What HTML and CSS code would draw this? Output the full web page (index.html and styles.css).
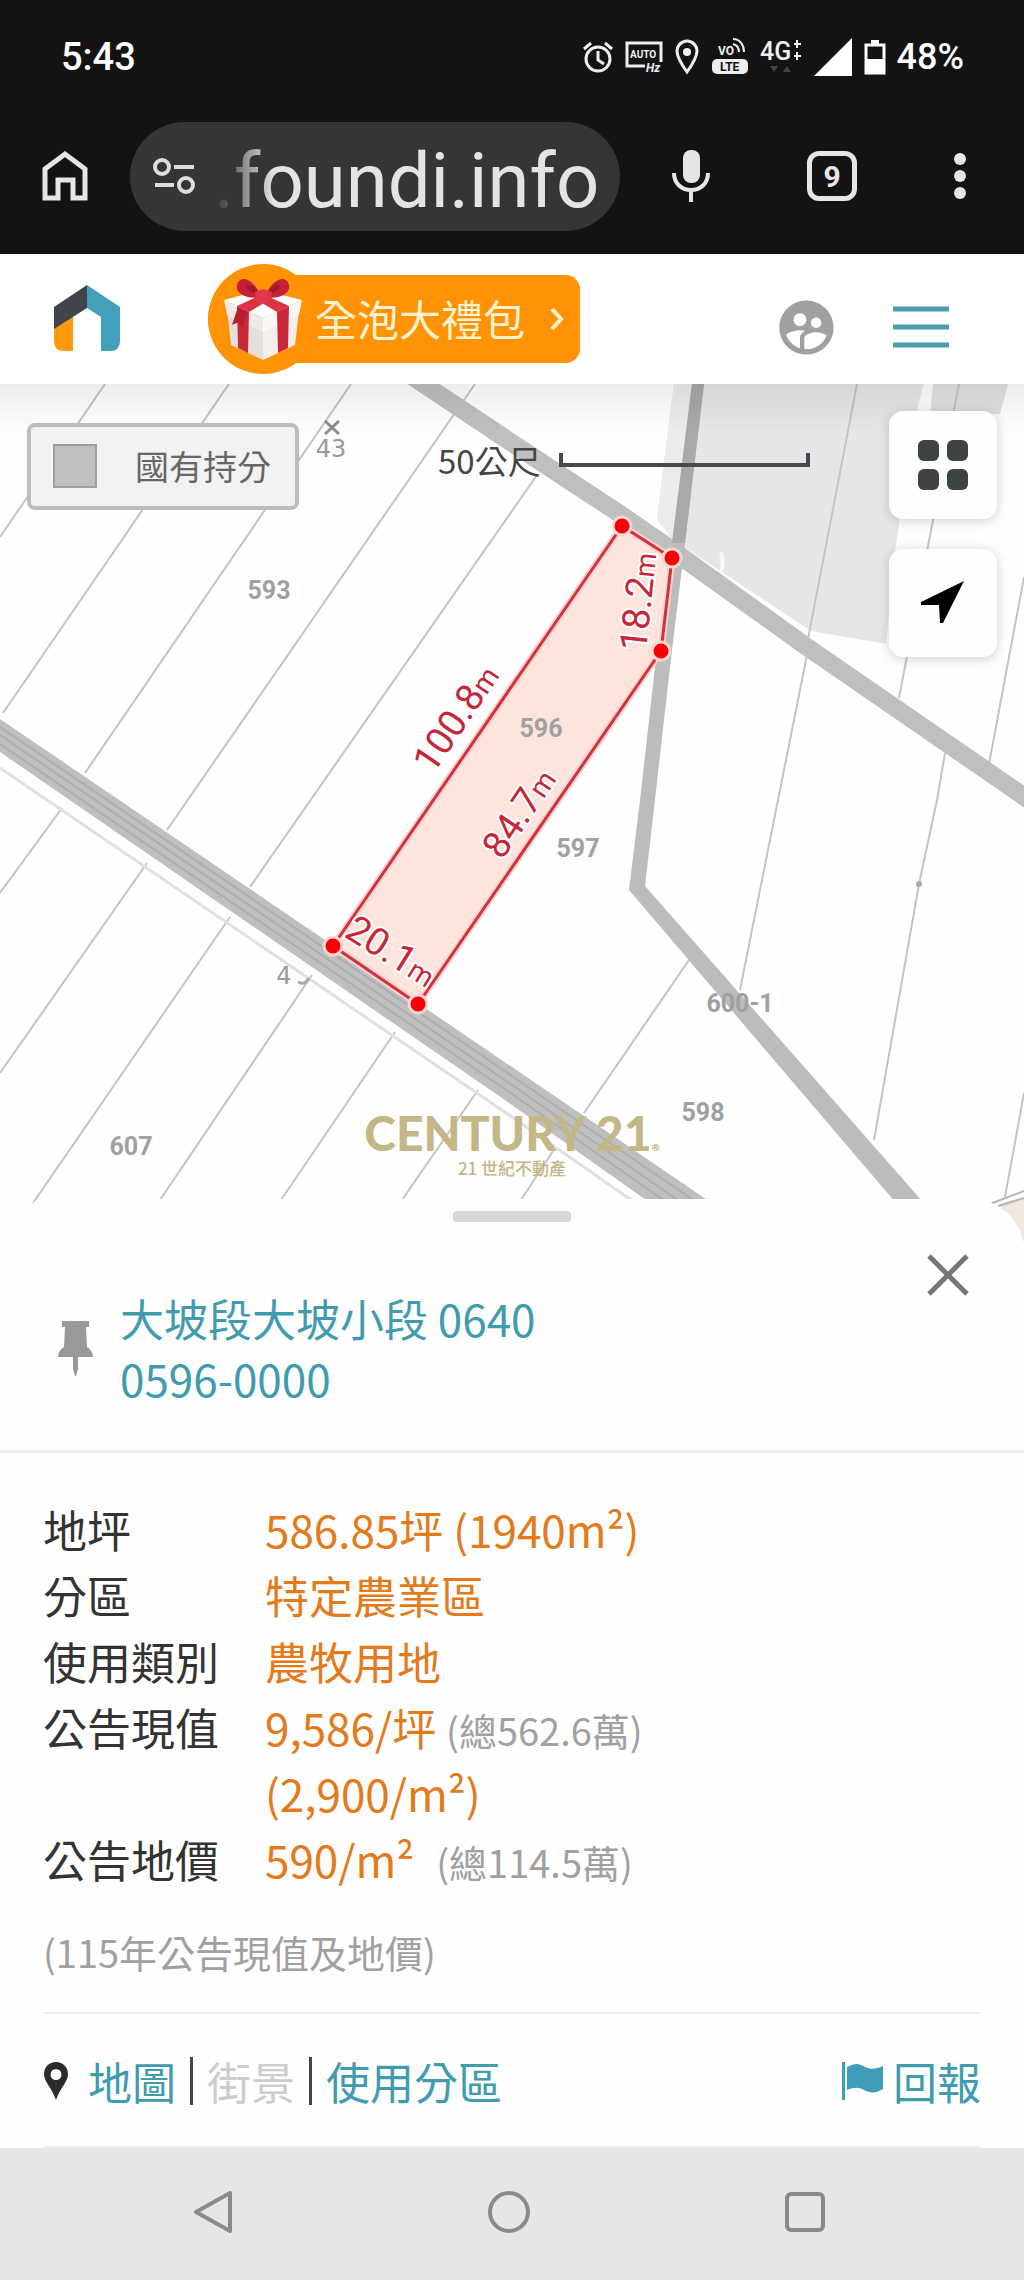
FILE: index.html
```html
<!DOCTYPE html>
<html lang="zh-Hant">
<head>
    <meta charset="UTF-8">
    <meta name="viewport" content="width=device-width, initial-scale=1.0">
    <title>foundi.info</title>
    <link rel="stylesheet" href="styles.css">
</head>
<body>
    <div class="status-bar">
        <span class="time">5:43</span>
        <div class="status-icons">
            <svg width="32" height="34" viewBox="0 0 32 34" fill="none" stroke="#eee" stroke-width="3">
                <circle cx="16" cy="19" r="12"/>
                <path d="M16 11v9l6 4M2 9l7-6M30 9l-7-6"/>
            </svg>
            <svg class="auto-icon" width="38" height="36" viewBox="0 0 38 36">
                <path d="M20 27H2V4h34v19" fill="none" stroke="#eee" stroke-width="3"/>
                <text x="5" y="19" class="tiny small">AUTO</text>
                <text x="21" y="33" class="tiny italic">Hz</text>
            </svg>
            <svg width="26" height="36" viewBox="0 0 26 36">
                <path d="M13 2C7 2 3 7 3 12c0 7 10 21 10 21s10-14 10-21c0-5-4-10-10-10z" fill="none" stroke="#eee" stroke-width="3"/>
                <circle cx="13" cy="13" r="4" fill="#eee"/>
            </svg>
            <svg width="38" height="38" viewBox="0 0 38 38">
                <text x="7" y="17" class="tiny">VO</text>
                <path d="M22 6c4 1 6 4 6 8M22 1c7 0 11 6 11 13" fill="none" stroke="#eee" stroke-width="2"/>
                <rect x="1" y="21" width="36" height="15" rx="5" fill="#eee"/>
                <text x="9" y="33" class="tiny dark">LTE</text>
            </svg>
            <svg width="42" height="38" viewBox="0 0 42 38">
                <text x="0" y="22" class="net">4G</text>
                <path d="M37 2v8M34 6h7M37 14v8M34 18h7" stroke="#eee" stroke-width="2"/>
                <path d="M10 28h8l-4 6zM23 34h8l-4-6z" fill="#444"/>
            </svg>
            <svg width="40" height="40" viewBox="0 0 40 40"><path d="M39 1v38H1z" fill="#fff"/></svg>
            <svg width="22" height="36" viewBox="0 0 22 36">
                <path d="M2 6h18v28H2z" fill="none" stroke="#fff" stroke-width="3"/>
                <path d="M7 1h8v5H7zM2 20h18v14H2z" fill="#fff"/>
            </svg>
            <span class="battery">48%</span>
        </div>
    </div>

    <div class="browser-bar">
        <button class="icon-button" aria-label="首頁">
            <svg width="48" height="52" viewBox="0 0 48 52" fill="none" stroke="#e6e6e6" stroke-width="5">
                <path d="M4 48V19L24 4l20 15v29H32V30H17v18z"/>
            </svg>
        </button>
        <div class="address">
            <svg width="44" height="38" viewBox="0 0 44 38" fill="none" stroke="#ddd" stroke-width="4">
                <circle cx="10" cy="10" r="7"/>
                <circle cx="34" cy="28" r="7"/>
                <path d="M22 10h20M3 28h19"/>
            </svg>
            <input type="text" class="url" value=".foundi.info" aria-label="網址">
        </div>
        <div class="browser-actions">
            <button class="icon-button" aria-label="語音">
                <svg width="40" height="54" viewBox="0 0 40 54">
                    <rect x="12" y="1" width="17" height="33" rx="8" fill="#e6e6e6"/>
                    <path d="M3 24c0 10 7 17 17 17s17-7 17-17M20 41v12" fill="none" stroke="#e6e6e6" stroke-width="4"/>
                </svg>
            </button>
            <button class="icon-button tabs">9</button>
            <button class="icon-button" aria-label="更多">
                <svg width="14" height="48" viewBox="0 0 14 48" fill="#e6e6e6">
                    <circle cx="7" cy="7" r="6"/>
                    <circle cx="7" cy="24" r="6"/>
                    <circle cx="7" cy="41" r="6"/>
                </svg>
            </button>
        </div>
    </div>

    <header class="app-header">
        <a href="#" class="logo" aria-label="foundi">
            <svg width="68" height="68" viewBox="0 0 68 68">
                <path d="M1 41l19-13v38h-9q-10 0-10-10z" fill="#ff9a0d"/>
                <path d="M34 0v23L1 44V22z" fill="#41444a"/>
                <path d="M34 0l33 22v34q0 10-10 10h-9V32L34 23z" fill="#42a0b8"/>
            </svg>
        </a>
        <a href="#" class="promo">
            <span class="gift">
                <svg width="80" height="84" viewBox="0 0 80 84">
                    <path d="M4 33l36 16v34L8 68z" fill="#e4dfdc"/>
                    <path d="M76 33L40 49v34l32-15z" fill="#f3efec"/>
                    <path d="M1 23l38-10 40 10-39 18z" fill="#fff"/>
                    <path d="M1 23l39 18v14L4 38z" fill="#eeeae8"/>
                    <path d="M79 23L40 41v14l36-17z" fill="#faf7f5"/>
                    <path d="M14 29l12 6-1 41-10-5zM66 29l-12 6 1 41 10-5z" fill="#c9283a"/>
                    <path d="M14 29l22-10 10 4-20 12zM66 29L44 19l-10 4 20 12z" fill="#db3343"/>
                    <path d="M15 30l-6 18 7-3 3 6 6-16z" fill="#b81d31"/>
                    <path d="M39 20C25 23 12 17 14 8S28-2 39 20zM41 20c14 3 27-3 25-12S52-2 41 20z" fill="#c91f36"/>
                    <path d="M36 17c-8-1-13-4-13-9 5-2 9 2 13 9zM44 17c8-1 13-4 13-9-5-2-9 2-13 9z" fill="#a01a2e"/>
                    <path d="M32 15l8-3 9 3-2 9-7 3-7-4z" fill="#e0384b"/>
                </svg>
            </span>
            <span class="promo-text">全泡大禮包</span>
            <svg width="14" height="26" viewBox="0 0 14 26" fill="none" stroke="#fff3cf" stroke-width="4"><path d="M2 3l9 10-9 10"/></svg>
        </a>
        <div class="header-actions">
            <button class="icon-button" aria-label="社團">
                <svg width="65" height="65" viewBox="0 0 24 24" fill="#a0a0a0">
                    <path d="M11.99 2c-5.52 0-10 4.48-10 10s4.48 10 10 10 10-4.48 10-10-4.48-10-10-10zm3.61 6.34c1.07 0 1.93.86 1.93 1.93 0 1.07-.86 1.93-1.93 1.93-1.07 0-1.93-.86-1.93-1.93-.01-1.07.86-1.93 1.93-1.93zm-6-1.58c1.3 0 2.36 1.06 2.36 2.36 0 1.3-1.06 2.36-2.36 2.36s-2.36-1.06-2.36-2.36c0-1.31 1.05-2.36 2.36-2.36zm0 9.13v3.75c-2.4-.75-4.3-2.6-5.14-4.96 1.05-1.12 3.67-1.69 5.14-1.69.53 0 1.2.08 1.9.22-1.64.87-1.9 2.02-1.9 2.68zM11.99 20c-.27 0-.53-.01-.79-.04v-4.07c0-1.42 2.94-2.13 4.4-2.13 1.07 0 2.92.39 3.84 1.15-1.17 2.97-4.06 5.09-7.45 5.09z"/>
                </svg>
            </button>
            <button class="icon-button" aria-label="選單">
                <svg width="56" height="42" viewBox="0 0 56 42" stroke="#4d9db0" stroke-width="5"><path d="M0 3h56M0 21h56M0 39h56"/></svg>
            </button>
        </div>
    </header>

    <section class="map">
        <svg class="map-canvas" viewBox="0 384 1024 864" preserveAspectRatio="xMidYMin slice">
            <!-- zoning area -->
            <path d="M674 384h250l-8 30-20 130-10 100-75-13-139-92-15-20z" fill="#e7e5e8"/>
            <path d="M933 384h75l-8 30h-70z" fill="#e2e0e3"/>
            <path d="M674 384h20l-20 155-17-20z" fill="#ececec"/>
            <path d="M721 552q4 12-1 22" fill="none" stroke="#f8f8f8" stroke-width="4"/>
            <!-- parcel borders -->
            <g class="parcels">
                <path d="M105 384L0 537M229 384L3 713M351 384L85 773M475 384L167 830M537 475L250 887"/>
                <path d="M62 808L0 893M147 863L0 1073M230 917L33 1203M312 975L160 1200M395 1032L281 1200M478 1090L402 1200M555 1148L521 1200M689 960L584 1113"/>
                <path d="M857 384l-49 255M807 655l-29 145-38 190M959 384l-60 314M1024 577l-35 187M945 753l-8 47-18 84-45 256M1024 1093l-19 104"/>
            </g>
            <circle cx="919" cy="884" r="3" fill="#aaa"/>
            <path d="M1000 1206l24-8v44z" fill="#efe8e0"/>
            <path d="M990 1204l34-13M998 1206l26-8" stroke="#b5b5b5" stroke-width="2"/>
            <!-- roads -->
            <path d="M0 768l512 349 122 85" fill="none" stroke="#e0e0e0" stroke-width="3"/>
            <path d="M0 719l512 348 210 143h-62l-148-105L0 752z" fill="#bfbfbf"/>
            <path d="M0 727l512 349 190 130M0 735l512 350 180 125M0 744l512 350 160 112" fill="none" stroke="#adadad" stroke-width="2"/>
            <path d="M410 375l102 68 108 71 52 36 135 97 225 155" fill="none" stroke="#bfbfbf" stroke-width="18"/>
            <path d="M692 384h12l-19 159-15 124-15 133-10 86 285 324h-28L629 890l11-90 15-133 17-124z" fill="#bcbcbc"/>
            <path d="M692 384h12l-19 159h-13z" fill="#a9a9a9"/>
            <!-- lot numbers -->
            <g class="lots">
                <text x="269" y="599">593</text>
                <text x="578" y="857">597</text>
                <text x="740" y="1012">600-1</text>
                <text x="703" y="1121">598</text>
                <text x="131" y="1155">607</text>
            </g>
            <path d="M325 421l14 13M339 421l-14 13" stroke="#8c8c8c" stroke-width="3"/>
            <text class="mark" x="331" y="457">43</text>
            <text class="mark" x="284" y="984">4</text>
            <path d="M298 982q7 4 11-4" fill="none" stroke="#aaa" stroke-width="3"/>
            <!-- selected lot -->
            <path d="M622 526l50 32-11 93-243 353-85-58z" fill="#fde2da" fill-opacity=".92" stroke="#fdd3cd" stroke-width="7"/>
            <path d="M622 526l50 32-11 93-243 353-85-58z" fill="none" stroke="#cf3340" stroke-width="3"/>
            <g class="lots"><text x="541" y="737">596</text></g>
            <g class="corners">
                <circle cx="622" cy="526" r="9"/>
                <circle cx="672" cy="558" r="9"/>
                <circle cx="661" cy="651" r="9"/>
                <circle cx="418" cy="1004" r="9"/>
                <circle cx="333" cy="946" r="9"/>
            </g>
            <g class="lengths">
                <text transform="translate(433 775) rotate(-56)">100.8<tspan>m</tspan></text>
                <text transform="translate(502 861) rotate(-56)">84.7<tspan>m</tspan></text>
                <text transform="translate(646 652) rotate(-84)">18.2<tspan>m</tspan></text>
                <text transform="translate(343 936) rotate(32)">20.1<tspan>m</tspan></text>
            </g>
        </svg>
        <div class="legend"><span class="legend-box"></span>國有持分</div>
        <div class="scale">50公尺<span class="scale-line"></span></div>
        <div class="map-buttons">
            <button class="map-button" aria-label="圖層">
                <svg width="52" height="52" viewBox="0 0 52 52" fill="#3c4446">
                    <rect x="1" y="1" width="21" height="21" rx="6"/>
                    <rect x="30" y="1" width="21" height="21" rx="6"/>
                    <rect x="1" y="30" width="21" height="21" rx="6"/>
                    <rect x="30" y="30" width="21" height="21" rx="6"/>
                </svg>
            </button>
            <button class="map-button" aria-label="定位">
                <svg width="46" height="46" viewBox="0 0 46 46"><path d="M44 1L1 22v3h18l1 18h3z"/></svg>
            </button>
        </div>
        <div class="watermark">
            <div class="brand">CENTURY 21<small>®</small></div>
            <div class="brand-sub">21 世紀不動產</div>
        </div>
    </section>

    <main class="sheet">
        <div class="handle"></div>
        <div class="sheet-title">
            <svg width="36" height="58" viewBox="0 0 36 58" fill="#999">
                <path d="M5 2h27v6h-3l1 20q6 4 6 10H1q0-6 6-10l1-20H5zM16 38h5v12l-2 7h-1l-2-7z"/>
            </svg>
            <h1><a href="#">大坡段大坡小段 0640<br>0596-0000</a></h1>
            <button class="icon-button close" aria-label="關閉">
                <svg width="42" height="42" viewBox="0 0 42 42" stroke="#777" stroke-width="5"><path d="M2 2l38 38M40 2L2 40"/></svg>
            </button>
        </div>
        <div class="details">
            <table>
                <tr><th>地坪</th><td>586.85坪 (1940m²)</td></tr>
                <tr><th>分區</th><td>特定農業區</td></tr>
                <tr><th>使用類別</th><td>農牧用地</td></tr>
                <tr><th>公告現值</th><td>9,586/坪 <span class="total">(總562.6萬)</span><br>(2,900/m²)</td></tr>
                <tr><th>公告地價</th><td>590/m² <span class="total spaced">(總114.5萬)</span></td></tr>
            </table>
            <p class="note">(115年公告現值及地價)</p>
            <div class="links">
                <svg width="26" height="40" viewBox="0 0 26 40"><path fill="#2b2b2b" fill-rule="evenodd" d="M13 1C6 1 1 6 1 13c0 8 8 14 12 26 4-12 12-18 12-26C25 6 20 1 13 1zm0 7a5 5 0 1 1 0 11 5 5 0 0 1 0-11z"/></svg>
                <a href="#">地圖</a><span class="bar"></span><span class="off">街景</span><span class="bar"></span><a href="#">使用分區</a>
                <a href="#" class="report">
                    <svg width="44" height="40" viewBox="0 0 44 40" fill="#3f9db8"><path d="M1 1h3v38H1zM6 6c9-5 13-3 18 0 6 3 11 2 18-1v23c-8 5-13 4-19 1-5-3-10-3-17 0z"/></svg>回報</a>
            </div>
        </div>
    </main>

    <nav class="nav-bar">
        <button class="icon-button" aria-label="返回">
            <svg width="42" height="44" viewBox="0 0 42 44" fill="none" stroke="#8a8a8a" stroke-width="4" stroke-linejoin="round"><path d="M38 3v38L4 22z"/></svg>
        </button>
        <button class="icon-button" aria-label="主畫面">
            <svg width="44" height="44" viewBox="0 0 44 44" fill="none" stroke="#8a8a8a" stroke-width="4"><circle cx="22" cy="22" r="19"/></svg>
        </button>
        <button class="icon-button" aria-label="最近">
            <svg width="42" height="42" viewBox="0 0 42 42" fill="none" stroke="#8a8a8a" stroke-width="4"><rect x="3" y="3" width="36" height="36" rx="4"/></svg>
        </button>
    </nav>
</body>
</html>
```
FILE: styles.css
```css
* {
    box-sizing: border-box;
}
body {
    margin: 0;
    min-height: 100vh;
    display: flex;
    flex-direction: column;
    background: #fefefe;
    color: #333;
    font-family: 'Noto Sans CJK TC', sans-serif;
}
svg {
    display: block;
    flex: none;
}
a {
    color: #409bae;
    text-decoration: none;
}
.icon-button {
    display: flex;
    align-items: center;
    justify-content: center;
    padding: 0;
    border: none;
    background: none;
    cursor: pointer;
}
/* phone status bar */
.status-bar {
    display: flex;
    align-items: center;
    justify-content: space-between;
    height: 114px;
    padding: 0 60px 0 61px;
    background: #131313;
    color: #fff;
    font-family: Roboto, sans-serif;
}
.time {
    font-size: 38px;
    font-weight: 500;
}
.battery {
    font-size: 36px;
    font-weight: 500;
}
.status-icons {
    display: flex;
    align-items: center;
    gap: 11px;
}
.tiny {
    font-size: 12px;
    font-weight: 700;
    fill: #eee;
}
.tiny.small {
    font-size: 10px;
}
.tiny.italic {
    font-style: italic;
}
.tiny.dark {
    fill: #131313;
}
.net {
    font-size: 25px;
    font-weight: 500;
    fill: #eee;
}
/* browser toolbar */
.browser-bar {
    display: flex;
    align-items: center;
    height: 140px;
    padding: 0 57px 16px 41px;
    background: #131313;
}
.address {
    display: flex;
    align-items: center;
    width: 490px;
    height: 109px;
    margin-left: 41px;
    padding: 0 18px 0 22px;
    border-radius: 55px;
    background: #353535;
}
.url {
    flex: 1;
    min-width: 0;
    margin-left: 18px;
    padding: 10px 0 0;
    border: none;
    background: none;
    color: #e4e4e4;
    font-family: Roboto, sans-serif;
    font-size: 76px;
    -webkit-mask-image: linear-gradient(to right, transparent, #000 60px);
    mask-image: linear-gradient(to right, transparent, #000 60px);
}
.browser-actions {
    flex: 1;
    display: flex;
    align-items: center;
    justify-content: space-between;
    margin-left: 51px;
}
.tabs {
    width: 50px;
    height: 50px;
    border: 5px solid #e6e6e6;
    border-radius: 12px;
    color: #e6e6e6;
    font-family: Roboto, sans-serif;
    font-size: 30px;
    font-weight: 700;
}
/* site header */
.app-header {
    display: flex;
    align-items: center;
    height: 130px;
    padding: 0 75px 0 53px;
    background: #fff;
}
.promo {
    display: flex;
    align-items: center;
    height: 88px;
    margin-left: 87px;
    padding-right: 16px;
    border-radius: 55px 18px 18px 55px;
    background: #ff9305;
    color: #fff3cf;
    font-size: 42px;
}
.gift {
    display: flex;
    align-items: center;
    justify-content: center;
    width: 110px;
    height: 110px;
    border-radius: 50%;
    background: #ff9305;
}
.promo-text {
    margin: 0 25px 4px -3px;
}
.header-actions {
    display: flex;
    align-items: center;
    gap: 54px;
    margin-left: auto;
    padding-top: 16px;
}
/* map */
.map {
    position: relative;
    height: 864px;
    overflow: hidden;
}
.map::before {
    content: "";
    position: absolute;
    left: 0;
    right: 0;
    top: 0;
    height: 50px;
    background: linear-gradient(rgba(0, 0, 0, 0.07), transparent);
}
.map-canvas {
    width: 100%;
    height: 100%;
}
.parcels {
    fill: none;
    stroke: #c4c4c4;
    stroke-width: 2px;
}
.lots {
    font-family: Roboto, sans-serif;
    font-size: 25px;
    font-weight: 700;
    fill: #a0a0a0;
    text-anchor: middle;
}
.mark {
    font-family: 'DejaVu Sans', sans-serif;
    font-size: 24px;
    fill: #999;
    text-anchor: middle;
}
.lengths {
    font-family: Roboto, sans-serif;
    font-size: 38px;
    fill: #c4273a;
    stroke: #fff;
    stroke-width: 4px;
    paint-order: stroke;
}
.lengths tspan {
    font-size: 28px;
}
.corners {
    fill: #f90008;
    stroke: #fdd8d4;
    stroke-width: 3px;
}
.legend {
    position: absolute;
    left: 27px;
    top: 39px;
    display: flex;
    align-items: center;
    gap: 38px;
    height: 87px;
    padding: 0 24px 2px 22px;
    border: 4px solid #bcbcbc;
    border-radius: 8px;
    background: #f2f2f2;
    color: #666;
    font-size: 34px;
}
.legend-box {
    width: 44px;
    height: 44px;
    border: 2px solid #9f9f9f;
    background: #c0c0c0;
}
.scale {
    position: absolute;
    left: 438px;
    top: 52px;
    display: flex;
    align-items: center;
    gap: 18px;
    color: #444;
    font-size: 33px;
    line-height: 48px;
}
.scale-line {
    width: 251px;
    height: 14px;
    border: 4px solid #454b4d;
    border-top: none;
}
.map-buttons {
    position: absolute;
    right: 27px;
    top: 27px;
    display: flex;
    flex-direction: column;
    gap: 30px;
}
.map-button {
    display: flex;
    align-items: center;
    justify-content: center;
    width: 108px;
    height: 108px;
    padding: 0;
    border: none;
    border-radius: 14px;
    background: #fefefe;
    box-shadow: 0 2px 12px rgba(0, 0, 0, 0.18);
    cursor: pointer;
}
.watermark {
    position: absolute;
    left: 0;
    right: 0;
    top: 724px;
    color: #c3b788;
    text-align: center;
}
.brand {
    font-family: Lato, sans-serif;
    font-size: 48px;
    font-weight: 900;
    line-height: 50px;
}
.brand small {
    font-size: 10px;
    line-height: 10px;
}
.brand-sub {
    font-size: 17px;
    font-weight: 500;
    line-height: 20px;
}
/* bottom sheet */
.sheet {
    position: relative;
    flex: 1;
    margin-top: -49px;
    border-radius: 52px 52px 0 0;
    background: #fefefe;
}
.handle {
    width: 118px;
    height: 11px;
    margin: 0 auto;
    border-radius: 4px;
    background: #d6d6d6;
    transform: translateY(12px);
}
.sheet-title {
    display: flex;
    align-items: center;
    height: 243px;
    padding: 44px 55px 8px 57px;
    border-bottom: 3px solid #efefef;
}
.sheet-title h1 {
    flex: 1;
    margin: 0 0 0 27px;
    font-size: 44px;
    font-weight: 400;
    line-height: 60px;
}
.close {
    align-self: flex-start;
}
.details {
    padding: 43px 43px 0;
}
table {
    border-collapse: collapse;
    font-size: 44px;
    line-height: 66px;
}
th {
    width: 222px;
    padding: 0;
    font-weight: 400;
    text-align: left;
    vertical-align: top;
}
td {
    padding: 0;
    color: #e37a1c;
}
.total {
    color: #a0a0a0;
    font-size: 38px;
    line-height: 1;
}
.spaced {
    margin-left: 12px;
}
.note {
    margin: 30px 0 0;
    padding-bottom: 30px;
    border-bottom: 2px solid #efefef;
    color: #a0a0a0;
    font-size: 38px;
    line-height: 60px;
}
.links {
    display: flex;
    align-items: center;
    height: 134px;
    padding-top: 2px;
    border-bottom: 2px solid #efefef;
    font-size: 44px;
}
.links svg + a {
    margin-left: 19px;
}
.bar {
    width: 3px;
    height: 48px;
    margin: 0 14px;
    background: #444;
}
.off {
    color: #ccc;
}
.report {
    display: flex;
    align-items: center;
    gap: 8px;
    margin-left: auto;
}
/* android navigation */
.nav-bar {
    display: flex;
    align-items: center;
    justify-content: space-around;
    height: 132px;
    padding: 0 72px 4px 66px;
    background: #e6e6e6;
}
```
